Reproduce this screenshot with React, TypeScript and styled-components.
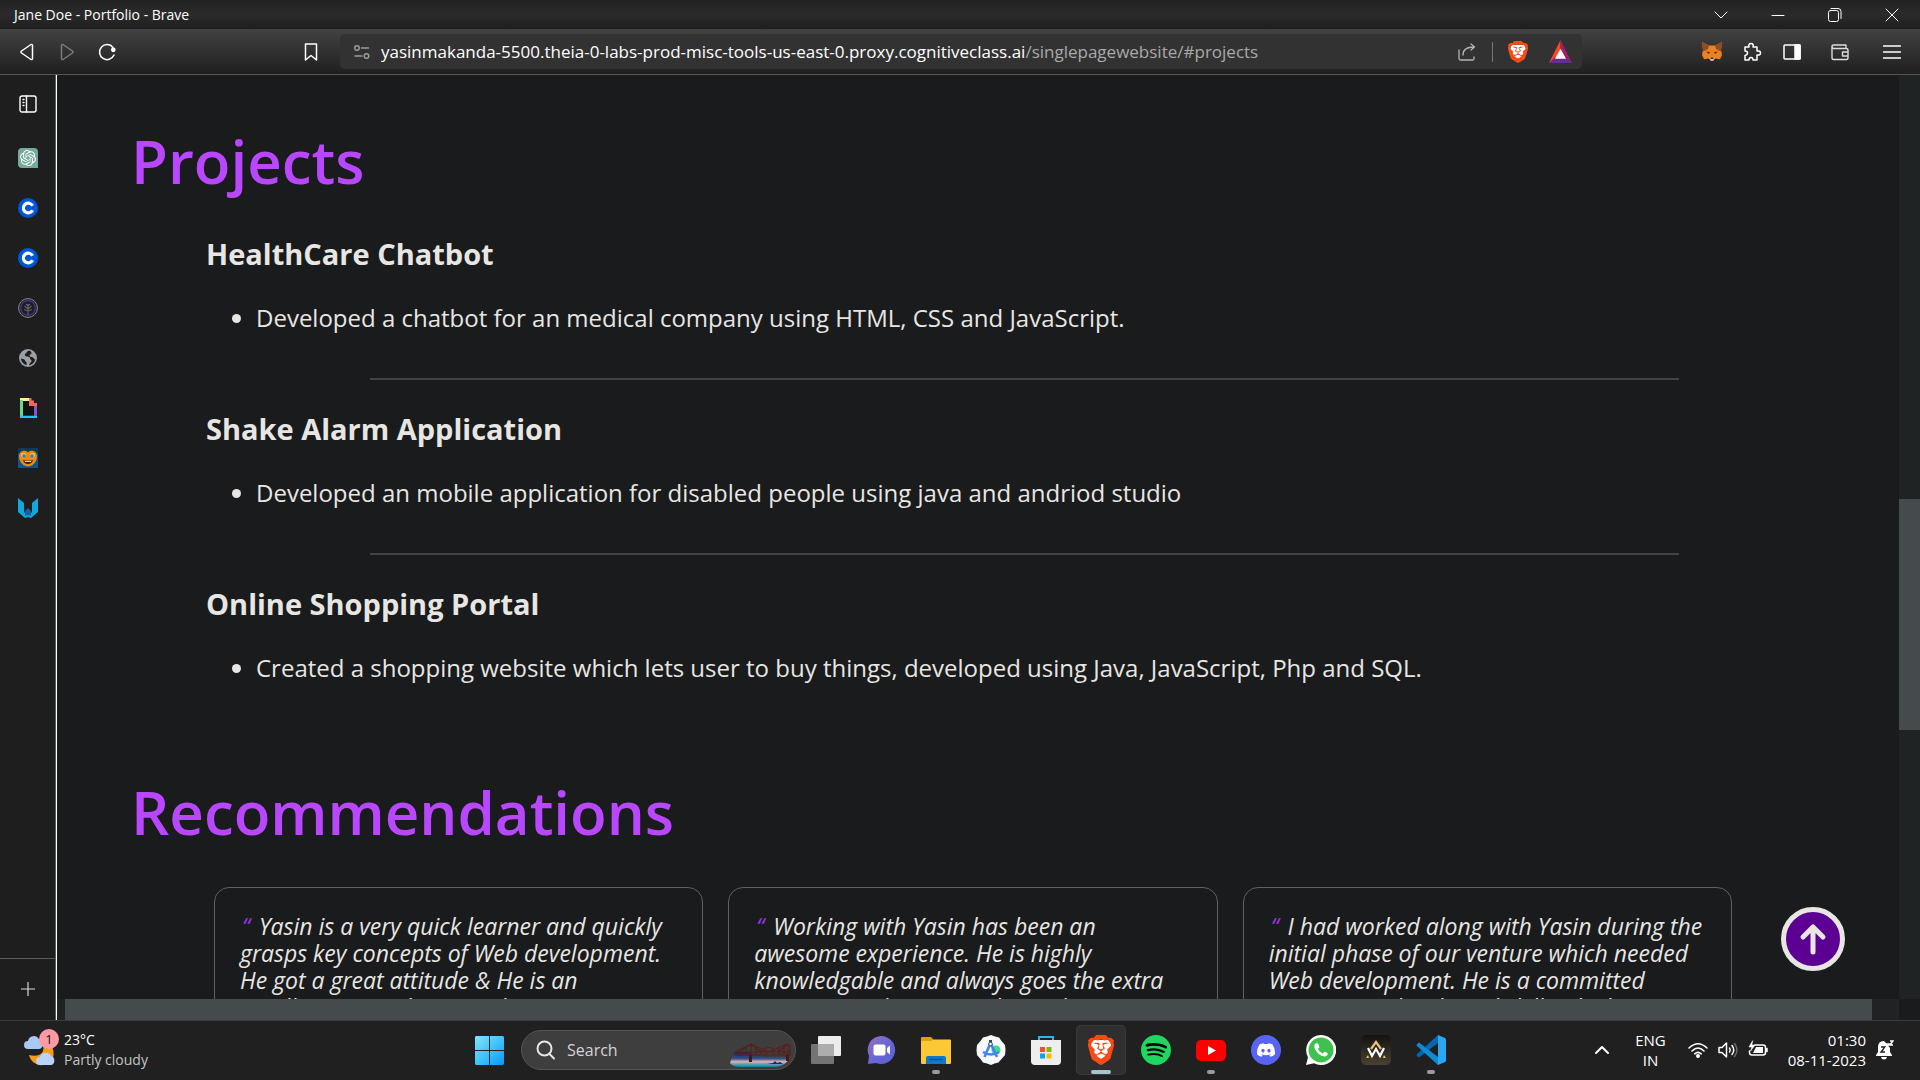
import React from "react";
import styled, { createGlobalStyle, css } from "styled-components";
import { SiBrave, SiOpenai, SiSpotify, SiDiscord } from "react-icons/si";

const UI = `"Open Sans", "Noto Sans", sans-serif`;
const BODY = `"Open Sans", "Noto Sans", sans-serif`;

const GlobalStyle = createGlobalStyle`
  * { box-sizing: border-box; }
  body { margin: 0; background: #191b1c; color: #fff; font-family: ${UI}; }
  button { border: 0; padding: 0; margin: 0; background: none; color: inherit; font: inherit; }
  svg { display: block; flex: none; }
  h2, h3, p, ul { margin: 0; }
`;

const Screen = styled.div`
  display: grid;
  grid-template-rows: 29px 46px minmax(0, 1fr) 60px;
  height: 100vh;
  overflow: hidden;
`;

/* window title */
const TitleBar = styled.header`
  display: flex;
  align-items: center;
  justify-content: space-between;
  padding-left: 14px;
  background: linear-gradient(#222, #2b2b2b 50%, #1e1e1e);
  font-size: 14px;
  line-height: 20px;
`;
const WindowButtons = styled.div`
  display: flex;
`;
const WindowButton = styled.button`
  display: grid;
  place-items: center;
  width: 57px;
  height: 29px;
`;

/* toolbar */
const Toolbar = styled.nav`
  display: flex;
  align-items: center;
  padding: 0 4px 0 7px;
  background: linear-gradient(#424242, #1f1f1f);
  border-bottom: 1px solid #555756;
`;
const IconButton = styled.button<{ $w?: number }>`
  display: grid;
  place-items: center;
  flex: none;
  width: ${(p) => p.$w ?? 40}px;
  height: 36px;
`;
const Spacer = styled.div<{ $w: number }>`
  flex: 0 1 ${(p) => p.$w}px;
`;
const AddressBar = styled.div`
  display: flex;
  align-items: center;
  flex: 1;
  min-width: 0;
  height: 35px;
  margin: 0 110px 0 9px;
  padding: 0 0 0 13px;
  border-radius: 5px;
  background: #323232;
`;
const Address = styled.a`
  flex: 1;
  min-width: 0;
  margin-left: 10px;
  overflow: hidden;
  white-space: nowrap;
  text-decoration: none;
  color: #fff;
  font-size: 17px;
  line-height: 24px;
`;
const AddressPath = styled.span`
  color: #a9a9a9;
`;
const Divider = styled.span`
  width: 1px;
  height: 20px;
  margin: 0 5px;
  background: #747474;
`;

/* middle area */
const Middle = styled.div`
  display: grid;
  grid-template-columns: 57px minmax(0, 1fr);
  min-height: 0;
`;
const Sidebar = styled.aside`
  display: flex;
  flex-direction: column;
  align-items: stretch;
  background: #1e1e1e;
  border-right: 1px solid #fff;
  box-shadow: inset -1px 0 #5a5a5a;
`;
const SidebarButton = styled.button<{ $h?: number }>`
  display: grid;
  place-items: center;
  height: ${(p) => p.$h ?? 50}px;
`;
const SidebarFooter = styled.div`
  display: grid;
  height: 62px;
  margin-top: auto;
  border-top: 1px solid #5a5c5b;
`;

const Browser = styled.div`
  display: grid;
  grid-template-columns: minmax(0, 1fr) 21px;
  grid-template-rows: minmax(0, 1fr) 21px;
  min-height: 0;
`;
const PageFrame = styled.main`
  position: relative;
  overflow: hidden;
  background: #191b1c;
  color: #e8e6e3;
  font-family: ${BODY};
`;
const VerticalTrack = styled.div`
  display: grid;
  grid-template-rows: 424fr 231fr 269fr;
  background: #1f2324;
`;
const HorizontalTrack = styled.div`
  display: grid;
  grid-template-columns: 8fr 1807fr 27fr;
  background: #1f2324;
`;
const VerticalThumb = styled.div`
  grid-row: 2;
  background: #454a4d;
`;
const HorizontalThumb = styled.div`
  grid-column: 2;
  background: #454a4d;
`;
const Corner = styled.div`
  background: #191b1c;
`;

const Section = styled.section<{ $top: number }>`
  padding: ${(p) => p.$top}px 0 0 74px;
`;
const Heading = styled.h2`
  color: #b947ff;
  font-size: 60px;
  font-weight: 600;
  line-height: 76px;
`;
const Projects = styled.div`
  margin: 37px 56px 0 75px;
`;
const ProjectTitle = styled.h3`
  font-size: 29px;
  font-weight: 700;
  line-height: 36px;
`;
const ProjectList = styled.ul`
  margin-top: 31px;
  padding-left: 50px;
  font-size: 24px;
  font-weight: 500;
  line-height: 30px;
`;
const Rule = styled.hr`
  width: 80%;
  height: 2px;
  margin: 45px auto 31px;
  border: 0;
  background: #3f4547;
`;
const Cards = styled.div`
  display: grid;
  grid-template-columns: repeat(3, minmax(0, 1fr));
  gap: 25px;
  margin: 37px 167px 0 83px;
`;
const Card = styled.blockquote`
  margin: 0;
  padding: 25px 24px 25px 25px;
  border: 1px solid #5c6365;
  border-radius: 15px;
  font-size: 23px;
  font-style: italic;
  font-weight: 500;
  line-height: 27px;
`;
const Quote = styled.span`
  padding: 0 3px 0 2px;
  color: #9a35e6;
`;
const TopButton = styled.button`
  position: absolute;
  right: 54px;
  bottom: 28px;
  display: grid;
  place-items: center;
  width: 64px;
  height: 64px;
  border: 5px solid #e8e6e3;
  border-radius: 50%;
  background: #5c0094;
`;

/* taskbar */
const Taskbar = styled.footer`
  display: grid;
  grid-template-columns: 1fr auto 1fr;
  align-items: center;
  padding-bottom: 1px;
  border-top: 1px solid #3a3b3b;
  background: #202020;
  font-size: 15px;
  line-height: 20px;
`;
const Weather = styled.button`
  display: flex;
  align-items: center;
  gap: 4px;
  padding-left: 24px;
  text-align: left;
`;
const WeatherText = styled.span`
  display: grid;
  font-size: 14px;
`;
const Muted = styled.span`
  color: #c4c4c4;
`;
const Apps = styled.div`
  display: flex;
  align-items: center;
  gap: 5px;
`;
const AppButton = styled.button<{ $state?: "open" | "active" }>`
  position: relative;
  display: grid;
  place-items: center;
  width: 50px;
  height: 50px;
  border-radius: 5px;
  ${(p) =>
    p.$state === "active" &&
    css`
      background: #2f2f2f;
      box-shadow: inset 0 0 0 1px #3a3a3a;
    `}
  ${(p) =>
    p.$state &&
    css`
      &::after {
        content: "";
        position: absolute;
        bottom: 1px;
        width: ${p.$state === "active" ? 20 : 8}px;
        height: 4px;
        border-radius: 2px;
        background: ${p.$state === "active" ? "#a9c3cd" : "#9a9a9a"};
      }
    `}
`;
const SearchBox = styled.label`
  display: flex;
  align-items: center;
  width: 275px;
  height: 40px;
  margin-left: 2px;
  padding: 0 3px 0 14px;
  overflow: hidden;
  border: 1px solid #555;
  border-radius: 20px;
  background: #3e3e3e;
`;
const SearchInput = styled.input`
  flex: 1;
  min-width: 0;
  padding: 0 0 0 11px;
  border: 0;
  outline: 0;
  background: none;
  color: #fff;
  font: 16px/24px ${UI};
  &::placeholder {
    color: #d4d4d4;
    opacity: 1;
  }
`;
const SearchArt = styled.span`
  align-self: flex-end;
  margin-bottom: 2px;
`;
const Tray = styled.div`
  display: flex;
  align-items: center;
  justify-content: flex-end;
  padding-right: 26px;
`;
const TrayButton = styled.button<{ $gap: number }>`
  display: grid;
  margin-left: ${(p) => p.$gap}px;
  justify-items: center;
`;
const Clock = styled.button`
  display: grid;
  margin-left: 20px;
  justify-items: end;
`;

const Line = ({ size = 20, w = 1.5, color = "#fff", box = 20, children }: any) => (
  <svg width={size} height={size} viewBox={`0 0 ${box} ${box}`} fill="none" stroke={color} strokeWidth={w} strokeLinecap="round" strokeLinejoin="round">
    {children}
  </svg>
);

const BraveLogo = ({ w, h }: { w: number; h: number }) => (
  <svg width={w} height={h} viewBox="2 0 20 24" preserveAspectRatio="none">
    <path d="M5 4h14l1 6-4 9-4 3-4-3-4-9z" fill="#fff" />
    <SiBrave size={24} color="#fb4b14" />
  </svg>
);
const CoinIcon = () => (
  <svg width="20" height="20" viewBox="0 0 20 20">
    <circle cx="10" cy="10" r="10" fill="#0056d6" />
    <path d="M14.600 7.700A4.900 4.900 0 1 0 14.600 12.300" fill="none" stroke="#fff" strokeWidth="3.200" />
  </svg>
);
const ChatGptIcon = () => (
  <svg width="20" height="20" viewBox="0 0 20 20">
    <path d="M4 0h12a4 4 0 0 1 4 4v16H4a4 4 0 0 1-4-4V4a4 4 0 0 1 4-4z" fill="#74aa9c" />
    <SiOpenai x={2} y={2} size={16} color="#fff" />
  </svg>
);
const TreeIcon = () => (
  <svg width="20" height="20" viewBox="0 0 20 20" fill="none">
    <circle cx="10" cy="10" r="9.400" stroke="#8f88a8" strokeWidth="1" />
    <circle cx="10" cy="10" r="7.300" stroke="#4b3596" strokeWidth="1.200" />
    <path d="M10 17V6M10 11 6.500 8M10 11l3.500-3M10 13l-4-1.500M10 13l4-1.500M8 6l2 2 2-2" stroke="#625c76" strokeWidth="1.200" />
  </svg>
);
const GlobeIcon = () => (
  <svg width="18" height="18" viewBox="0 0 18 18">
    <circle cx="9" cy="9" r="9" fill="#9ba0a6" />
    <path d="M9.500 1.800C7 3 8 4 6.800 4.500 5 5 6 7 7.600 7.500c1.800.5 3.400 0 3.400 2 0 1.600 1.800 1 1.600 2.500-.3 1.700-2.200 2-2.600 4.200 3.500-.3 5.500-2.700 6.200-5.700-1.500-.2-1.200-1.800-2.700-2.200-1.600-.4-2.900-.3-2.900-1.800 0-1.300 1.800-1 2-2.400.1-.9-.8-1.200-1.100-2zM2 9.500c1 .2 3.500.4 4 1.900.4 1.300 1.600 1 1.600 2.300v2.200C4.500 15.600 2.100 12.700 2 9.500z" fill="#1e1e1e" />
  </svg>
);
const PageIcon = () => (
  <svg width="17" height="20" viewBox="0 0 17 20">
    <path d="M0 0h9v3H0z" fill="#fff78a" />
    <path d="M0 2h3v16H0z" fill="#6bd98b" />
    <path d="M0 17.500h17V20H0z" fill="#1fc3ff" />
    <path d="M14 7h3v11h-3z" fill="#8456c9" />
    <path d="M9 0h2.500v2.500H14V5h3v3H9z" fill="#ff6363" />
    <path d="M3 3h6v5h5v9.500H3z" fill="#121212" />
  </svg>
);
const HeartFaceIcon = () => (
  <svg width="20" height="20" viewBox="0 0 20 20">
    <path d="M0 0h20v20H0z" fill="#045697" />
    <path d="M0 0h20v5H0z" fill="#083c58" />
    <path d="M10 4.500C12 1.500 19 2 19 8.500c0 6-5 10-9 10s-9-4-9-10C1 2 8 1.500 10 4.500z" fill="#f0870f" />
    <path d="M3 6.500c1-2 4-2 5 0l-1 3H4zM12 6.500c1-2 4-2 5 0l-1 3h-3z" fill="#ffc46a" />
    <circle cx="6" cy="8" r="1.700" fill="#1489b8" />
    <circle cx="14" cy="8" r="1.700" fill="#1489b8" />
    <path d="M5 12q5 1.500 10 0-1 4-5 4t-5-4z" fill="#471b05" />
    <path d="M6.500 12.700q3.500 1 7 0l-.6 1.200H7.200z" fill="#fff" />
  </svg>
);
const WingIcon = () => (
  <svg width="20" height="20" viewBox="0 0 20 20">
    <path d="M0 0l6 5v10l3-3 1 7-3 1-7-6zM20 0l-6 5v10l-3-3-1 7 3 1 7-6z" fill="#11a8dd" />
    <path d="M7 13l3-3 3 3v5l-3-2-3 2z" fill="#0d62ad" />
  </svg>
);
const BatIcon = () => (
  <svg width="23" height="23" viewBox="0 0 23 24" preserveAspectRatio="none">
    <path d="M11.500 0 0 24l11.500-9z" fill="#ff4724" />
    <path d="M11.500 0 23 24l-11.500-9z" fill="#9e1f63" />
    <path d="M0 24h23l-6-6H6z" fill="#662d91" />
    <path d="M11.500 9 6 19.500h11z" fill="#fff" />
  </svg>
);
const FoxIcon = () => (
  <svg width="20" height="19" viewBox="0 0 20 22" preserveAspectRatio="none">
    <path d="M0 0l7 4h6l7-4-1 9 1 6-2 5-5-1-2 3H9l-2-3-5 1-2-5 1-6z" fill="#f0811c" />
    <path d="M0 0l7 4-1 4-5 3zM20 0l-7 4 1 4 5 3z" fill="#8d4d25" />
    <path d="M4 11l4 1-1 2zM16 11l-4 1 1 2z" fill="#233447" />
    <path d="M7 18h6l-1.500 3.500h-3z" fill="#d7c1b3" />
    <path d="M8.500 18h3v1.500h-3z" fill="#161616" />
  </svg>
);
const WeatherIcon = () => (
  <svg width="36" height="44" viewBox="0 0 36 44">
    <path d="M19 18c2 6-3 12-14 9 2 9 12 13 20 8 6-4 6-13 1-20z" fill="#f79a1e" />
    <path d="M4 21a4 4 0 0 1 0-8 6 6 0 0 1 11-2c5 1 5 10 0 10z" fill="#a9c8f5" />
    <path d="M16 37a4 4 0 0 1 0-8 6 6 0 0 1 11-1c5 1 4 9 0 9z" fill="#b9d3fa" />
    <circle cx="25" cy="11" r="10" fill="#ff99a4" />
    <text x="25" y="16" textAnchor="middle" fontSize="13" fontFamily="Open Sans, sans-serif" fill="#111">1</text>
  </svg>
);
const StartIcon = () => (
  <svg width="29" height="29" viewBox="0 0 29 29">
    <defs>
      <linearGradient id="win" x1="0" y1="0" x2="29" y2="29" gradientUnits="userSpaceOnUse">
        <stop stopColor="#86e2fb" />
        <stop offset=".5" stopColor="#3fc4fb" />
        <stop offset="1" stopColor="#0a96fb" />
      </linearGradient>
    </defs>
    <path d="M1 0h13v14H0V1zM15 0h13l1 1v13H15zM0 15h14v14H1l-1-1zM15 15h14v13l-1 1H15z" fill="url(#win)" />
  </svg>
);
const BridgeArt = () => (
  <svg width="62" height="24" viewBox="0 0 62 24">
    <defs>
      <linearGradient id="dusk" x1="0" y1="0" x2="0" y2="1">
        <stop stopColor="#1c2648" />
        <stop offset=".45" stopColor="#34508c" />
        <stop offset=".65" stopColor="#e6b8a4" />
        <stop offset=".75" stopColor="#7fa6cf" />
        <stop offset="1" stopColor="#157f96" />
      </linearGradient>
    </defs>
    <path d="M5 9h14q8 5 22 5h19q-3 8-14 10H12Q2 24 0 20q1-6 5-11z" fill="url(#dusk)" />
    <path d="M37 21h16l-3-2-3 1-2-2-2 2z" fill="#1d2d50" />
    <path d="M5 9 21 1l17 8 20-8M5 12h56M5 9h56M21 1v17M58 1v17M60 1v11M21 1 9 9M21 1l10 8M58 1 48 9M11 7v5M16 4v8M26 4v8M31 7v5M36 8v4M43 7v5M49 5v7M54 3v9M33 7q6-5 12 0" fill="none" stroke="#5a1f1a" strokeWidth="1.100" />
    <path d="M19 12h3v7h-3zM56 12h3v6h-3z" fill="#481713" />
  </svg>
);
const TaskViewIcon = () => (
  <svg width="30" height="28" viewBox="0 0 30 28">
    <rect x="7" width="23" height="20" rx="1" fill="#ededed" />
    <rect y="8" width="23" height="20" rx="1" fill="#747474" />
    <path d="M7 8h16v12H7z" fill="#adadad" />
  </svg>
);
const MeetIcon = () => (
  <svg width="29" height="28" viewBox="0 0 29 28">
    <defs>
      <linearGradient id="meet" x1="0" y1="0" x2="1" y2="1">
        <stop stopColor="#9b6fc0" />
        <stop offset=".5" stopColor="#6a66d6" />
        <stop offset="1" stopColor="#5a5fd6" />
      </linearGradient>
    </defs>
    <path d="M15 0a14 14 0 1 1-6 27l-8 1 1-8A14 14 0 0 1 15 0z" fill="url(#meet)" />
    <rect x="6.500" y="8.500" width="12" height="11" rx="2" fill="#fff" />
    <path d="M20 12l3-2.500v9L20 16z" fill="#fff" />
  </svg>
);
const FolderIcon = () => (
  <svg width="30" height="28" viewBox="0 0 30 28">
    <path d="M0 2q0-1 1-1h9l3 3h16v8H0z" fill="#e0a008" />
    <path d="M0 5h10l3-1.500h16q1 0 1 1V27q0 1-1 1H1q-1 0-1-1z" fill="#fdc836" />
    <path d="M5 28v-6q0-2 2-2h16q2 0 2 2v6z" fill="#0f78cc" />
    <path d="M8.500 23.500h13" stroke="#0b4f94" strokeWidth="1.300" />
  </svg>
);
const StudioIcon = () => (
  <svg width="30" height="30" viewBox="0 0 30 30">
    <path d="M15 0l4 1.500 4 1 2.500 3.500L29 10l.5 5-.5 5-3.500 4-3 3.500-4 1L15 30l-4-1.500-4-1L4.500 24 1 20l-.5-5L1 10l3.500-4L7 2.500l4-1z" fill="#f6f8fa" />
    <circle cx="20" cy="15" r="4.500" fill="#3ddc84" />
    <path d="M14.500 8 8.500 22M14.500 8l6.500 14M7 17q8 5 16 0" fill="none" stroke="#4285f4" strokeWidth="2.600" />
    <path d="M14.500 5v4" stroke="#2c4a66" strokeWidth="3" />
    <circle cx="14.500" cy="9" r="1.800" fill="#fff" stroke="#2c4a66" />
  </svg>
);
const StoreIcon = () => (
  <svg width="30" height="29" viewBox="0 0 30 29">
    <path d="M8 6V1h14v5" fill="none" stroke="#29b5ee" strokeWidth="2" />
    <path d="M0 4h30v21q0 4-4 4H4q-4 0-4-4z" fill="#eee" />
    <path d="M9 11h5v5H9z" fill="#f25022" />
    <path d="M15.500 11h5v5h-5z" fill="#7fba00" />
    <path d="M9 17.500h5v5H9z" fill="#00a4ef" />
    <path d="M15.500 17.500h5v5h-5z" fill="#ffb900" />
  </svg>
);
const SpotifyIcon = () => (
  <svg width="30" height="30" viewBox="0 0 24 24">
    <circle cx="12" cy="12" r="11" fill="#000" />
    <SiSpotify size={24} color="#1ed760" />
  </svg>
);
const YoutubeIcon = () => (
  <svg width="30" height="21" viewBox="0 0 30 21">
    <rect width="30" height="21" rx="5" fill="#f00" />
    <path d="M12 6v9l8-4.500z" fill="#fff" />
  </svg>
);
const DiscordIcon = () => (
  <svg width="30" height="30" viewBox="0 0 30 30">
    <circle cx="15" cy="15" r="15" fill="#5865f2" />
    <SiDiscord x={6} y={6} size={18} color="#fff" />
  </svg>
);
const WhatsappIcon = () => (
  <svg width="30" height="30" viewBox="0 0 24 24">
    <path d="M12 0a12 12 0 1 1-5.600 22.500L0 24l1.600-6.200A12 12 0 0 1 12 0z" fill="#fff" />
    <circle cx="12" cy="12" r="10" fill="#3dc14f" />
    <path d="M8.300 6.600c-.4-.1-1.700.6-1.700 2.200 0 3.600 4.600 8.300 8.300 8.300 1.500 0 2.500-1 2.500-2.100 0-.7-2.100-1.600-2.500-1.600-.5 0-1 1.300-1.400 1.300-.9 0-3.800-2.500-3.800-3.500 0-.4 1-.9 1-1.400 0-.6-.9-3.100-1.400-3.200z" fill="#fff" />
  </svg>
);
const PeakIcon = () => (
  <svg width="30" height="30" viewBox="0 0 30 30">
    <defs>
      <linearGradient id="peak" x1="0" y1="0" x2="0" y2="1">
        <stop stopColor="#131110" />
        <stop offset="1" stopColor="#4b4231" />
      </linearGradient>
    </defs>
    <rect width="30" height="30" rx="5" fill="url(#peak)" />
    <path d="M10 14 15 7l5 7" fill="none" stroke="#e6bf78" strokeWidth="2.200" />
    <path d="M7 13l4 8 4-7 4 7 4-8" fill="none" stroke="#fff" strokeWidth="2.200" />
    <path d="M5 23l2-3 1 3zM25 23l-2-3-1 3z" fill="#e6bf78" />
  </svg>
);
const CodeIcon = () => (
  <svg width="30" height="30" viewBox="0 0 30 30">
    <path d="M22 8 3 22.500l-2-1.700q-1-.8 0-1.800L22 0z" fill="#0067b0" />
    <path d="M22 22 3 7.500 1 9.200q-1 .8 0 1.800L22 30z" fill="#0d8bd4" />
    <path d="M22 0l7 3q1 .5 1 1.600v20.800q0 1.100-1 1.600l-7 3z" fill="#29a9f4" />
  </svg>
);

const sidebarApps = [
  ["ChatGPT", <ChatGptIcon />],
  ["Course", <CoinIcon />],
  ["Course", <CoinIcon />],
  ["Tree", <TreeIcon />],
  ["Website", <GlobeIcon />],
  ["Animations", <PageIcon />],
  ["Faces", <HeartFaceIcon />],
  ["Wings", <WingIcon />],
] as const;

const projects = [
  ["HealthCare Chatbot", "Developed a chatbot for an medical company using HTML, CSS and JavaScript."],
  ["Shake Alarm Application", "Developed an mobile application for disabled people using java and andriod studio"],
  ["Online Shopping Portal", "Created a shopping website which lets user to buy things, developed using Java, JavaScript, Php and SQL."],
];

const quotes = [
  "Yasin is a very quick learner and quickly grasps key concepts of Web development. He got a great attitude & He is an excellent\u00a0team player. He has amazing",
  "Working with Yasin has been an awesome experience. He is highly knowledgable and always goes the extra measure and comes with insights. To",
  "I had worked along with Yasin during the initial phase of our venture which needed Web development. He is a committed resource and technical skills which are",
];

const apps: { name: string; icon: React.ReactNode; state?: "open" | "active" }[] = [
  { name: "Task view", icon: <TaskViewIcon /> },
  { name: "Chat", icon: <MeetIcon /> },
  { name: "File Explorer", icon: <FolderIcon />, state: "open" },
  { name: "Android Studio", icon: <StudioIcon /> },
  { name: "Store", icon: <StoreIcon /> },
  { name: "Brave", icon: <BraveLogo w={26} h={30} />, state: "active" },
  { name: "Spotify", icon: <SpotifyIcon /> },
  { name: "YouTube", icon: <YoutubeIcon />, state: "open" },
  { name: "Discord", icon: <DiscordIcon /> },
  { name: "WhatsApp", icon: <WhatsappIcon /> },
  { name: "Peak", icon: <PeakIcon /> },
  { name: "Code", icon: <CodeIcon />, state: "open" },
];

export default function App() {
  return (
    <Screen>
      <GlobalStyle />
      <TitleBar>
        <span>Jane Doe - Portfolio - Brave</span>
        <WindowButtons>
          <WindowButton aria-label="Search tabs"><Line size={14} box={14} w={1}><path d="M1 4l6 6 6-6" /></Line></WindowButton>
          <WindowButton aria-label="Minimize"><Line size={14} box={14} w={1}><path d="M1 7.500h12" /></Line></WindowButton>
          <WindowButton aria-label="Restore"><Line size={14} box={14} w={1}><rect x=".5" y="2.500" width="10" height="11" rx="2" /><path d="M3 .5h7a3 3 0 0 1 3 3v7" /></Line></WindowButton>
          <WindowButton aria-label="Close"><Line size={14} box={14} w={1}><path d="M1 1l12 12M13 1 1 13" /></Line></WindowButton>
        </WindowButtons>
      </TitleBar>

      <Toolbar>
        <IconButton aria-label="Back"><Line><path d="M14 2.500 4.500 9q-1.200 1 0 2L14 17.500q1.500.5 1.500-1v-13q0-1.500-1.500-1z" /></Line></IconButton>
        <IconButton aria-label="Forward"><Line color="#7d7d7d"><path d="M6 2.500 15.500 9q1.200 1 0 2L6 17.500q-1.500.5-1.500-1v-13q0-1.500 1.500-1z" /></Line></IconButton>
        <IconButton aria-label="Reload"><Line><path d="M16 5.500A7.500 7.500 0 1 0 17 13" /><circle cx="16.300" cy="7.800" r="1.600" fill="#fff" /></Line></IconButton>
        <Spacer $w={164} />
        <IconButton aria-label="Bookmark"><Line><path d="M4.500 2h11v16L10 13.500 4.500 18z" /></Line></IconButton>
        <AddressBar>
          <Line size={18} box={18} color="#9c9c9c" w={1.4}><circle cx="4" cy="5" r="2.300" /><path d="M8.500 5h7M2 13h7" /><circle cx="13.500" cy="13" r="2.300" /></Line>
          <Address href="#projects">
            yasinmakanda-5500.theia-0-labs-prod-misc-tools-us-east-0.proxy.cognitiveclass.ai<AddressPath>/singlepagewebsite/#projects</AddressPath>
          </Address>
          <IconButton aria-label="Share"><Line color="#b4b4b4" w={1.3}><path d="M2 8v8.500q0 1.500 1.500 1.500h12q1.500 0 1.500-1.500V15M6 13c0-5 3-8 11-8M14 2l3.500 3L14 8" /></Line></IconButton>
          <Divider />
          <IconButton aria-label="Brave Shields"><BraveLogo w={20} h={22} /></IconButton>
          <IconButton aria-label="Rewards" $w={44}><BatIcon /></IconButton>
        </AddressBar>
        <IconButton aria-label="MetaMask"><FoxIcon /></IconButton>
        <IconButton aria-label="Extensions"><Line><path d="M3 5h4q-1-3.500 2-3.500T11 5h4v4q3.500-.5 3.500 2T15 13v5h-4q0-2.500-2-2.500T7 18H3v-4.500q2.500-.5 2.500-2.500T3 9z" /></Line></IconButton>
        <IconButton aria-label="Side panel"><Line><rect x="2" y="3" width="16" height="14" rx="1" /><path d="M13 3h5v14h-5z" fill="#fff" /></Line></IconButton>
        <IconButton aria-label="Wallet" $w={56}><Line color="#dedede" w={1.4}><path d="M2 4.500q0 2 2 2h12V3H4Q2 3 2 4.500V16q0 1.500 1.500 1.500h13q1.500 0 1.500-1.500V8q0-1.500-1.500-1.500M18 10h-5.500v4H18" /></Line></IconButton>
        <IconButton aria-label="Menu" $w={48}><Line w={1.3}><path d="M1.500 4h17M1.500 10h17M1.500 16h17" /></Line></IconButton>
      </Toolbar>

      <Middle>
        <Sidebar>
          <SidebarButton $h={58} aria-label="Toggle sidebar"><Line size={18} box={18} w={1.4}><rect x="1" y="1" width="16" height="16" rx="2" /><path d="M7.500 1v16M4 4.500h1M4 7.500h1M4 10.500h1" /></Line></SidebarButton>
          {sidebarApps.map(([name, icon], i) => (
            <SidebarButton key={i} aria-label={name}>{icon}</SidebarButton>
          ))}
          <SidebarFooter>
            <SidebarButton $h={60} aria-label="Add to sidebar"><Line size={14} box={14} w={1.2} color="#d8d8d8"><path d="M7 .5v13M.5 7h13" /></Line></SidebarButton>
          </SidebarFooter>
        </Sidebar>

        <Browser>
          <PageFrame>
            <Section $top={48} id="projects">
              <Heading>Projects</Heading>
              <Projects>
                {projects.map(([title, text], i) => (
                  <React.Fragment key={title}>
                    {i > 0 && <Rule />}
                    <ProjectTitle>{title}</ProjectTitle>
                    <ProjectList><li>{text}</li></ProjectList>
                  </React.Fragment>
                ))}
              </Projects>
            </Section>
            <Section $top={91}>
              <Heading>Recommendations</Heading>
              <Cards>
                {quotes.map((q) => (
                  <Card key={q}><Quote>“</Quote> {q}</Card>
                ))}
              </Cards>
            </Section>
            <TopButton aria-label="Back to top"><Line size={32} box={32} w={5} color="#e8e6e3"><path d="M16 29V4M6 14 16 4l10 10" /></Line></TopButton>
          </PageFrame>
          <VerticalTrack><VerticalThumb /></VerticalTrack>
          <HorizontalTrack><HorizontalThumb /></HorizontalTrack>
          <Corner />
        </Browser>
      </Middle>

      <Taskbar>
        <Weather>
          <WeatherIcon />
          <WeatherText><span>23°C</span><Muted>Partly cloudy</Muted></WeatherText>
        </Weather>
        <Apps>
          <AppButton aria-label="Start"><StartIcon /></AppButton>
          <SearchBox>
            <Line w={2} color="#e6e6e6"><circle cx="8.500" cy="8.500" r="7" /><path d="M13.500 14l4.500 4.500" /></Line>
            <SearchInput placeholder="Search" aria-label="Search" />
            <SearchArt><BridgeArt /></SearchArt>
          </SearchBox>
          {apps.map((a) => (
            <AppButton key={a.name} aria-label={a.name} $state={a.state}>{a.icon}</AppButton>
          ))}
        </Apps>
        <Tray>
          <TrayButton $gap={0} aria-label="Hidden icons"><Line size={14} box={14} w={2}><path d="M1 10l6-6 6 6" /></Line></TrayButton>
          <TrayButton $gap={26}><span>ENG</span><span>IN</span></TrayButton>
          <TrayButton $gap={22} aria-label="Network"><Line w={1.6}><path d="M1 8q9-8.500 18 0M4 11q6-6 12 0M6.800 13.800q3.200-3 6.400 0" /><circle cx="10" cy="16" r="1.200" fill="#fff" /></Line></TrayButton>
          <TrayButton $gap={10} aria-label="Volume"><Line><path d="M1 7.500h3l4.500-4.500v14L4 12.500H1zM11.500 8q1.500 2 0 4M14 5.500q3.500 4.500 0 9" /><path d="M16.500 3.500q5 6.500 0 13" stroke="#6a6a6a" /></Line></TrayButton>
          <TrayButton $gap={10} aria-label="Battery"><Line><path d="M7 5h8q2.500 0 2.500 2.500v5Q17.500 15 15 15H4q-2.500 0-2.500-2.500V11M19 8.500v3" /><path d="M8 7h7v6H5z" fill="#fff" stroke="none" /><path d="M4.500 1 1 7h3L2.500 11 7 5H4z" fill="#fff" strokeWidth=".6" /></Line></TrayButton>
          <Clock><span>01:30</span><span>08-11-2023</span></Clock>
          <TrayButton $gap={10} aria-label="Notifications">
            <svg width="18" height="20" viewBox="0 0 18 20">
              <path d="M8 1q-6 0-6 6v5l-2 3v1h16v-1l-2-3V8L9 2zM5 17h6q-.5 2.500-3 2.500T5 17z" fill="#fff" />
              <path d="M5 7h4l-4 5h4" fill="none" stroke="#202020" strokeWidth="1.400" />
              <path d="M9.500 4h3.500l-3.500 4.500H13M14 1h3l-3 4h3" fill="none" stroke="#fff" strokeWidth="1.400" />
            </svg>
          </TrayButton>
        </Tray>
      </Taskbar>
    </Screen>
  );
}
